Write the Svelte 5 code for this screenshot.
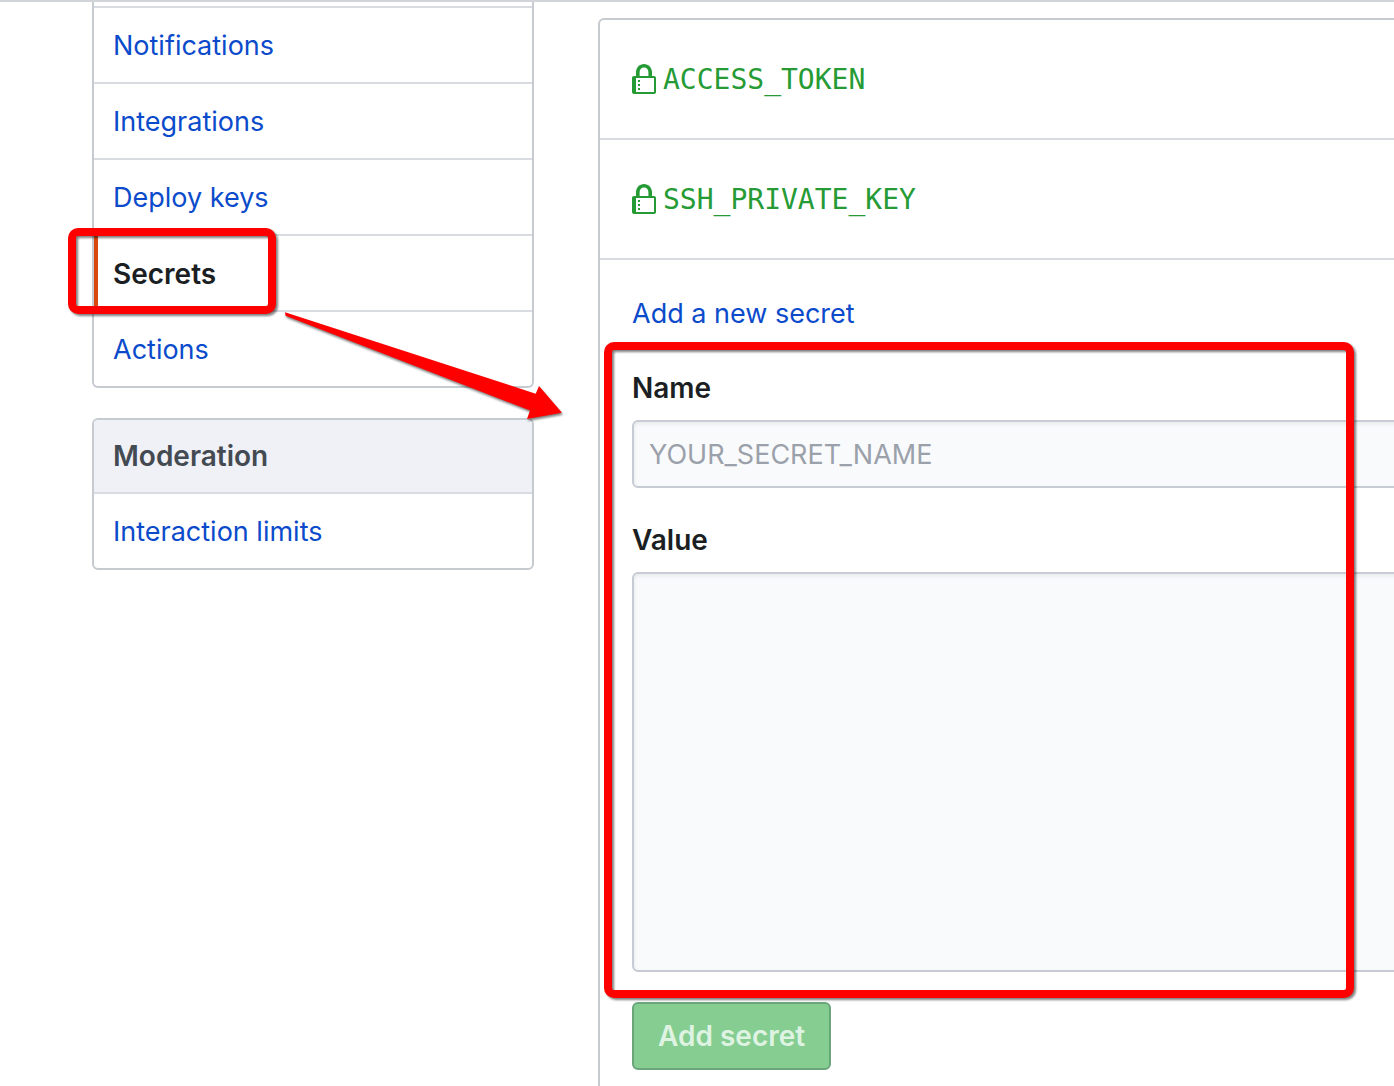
<script>
  const settings = ['Notifications', 'Integrations', 'Deploy keys', 'Secrets', 'Actions'];
  const active = 'Secrets';
  const secrets = ['ACCESS_TOKEN', 'SSH_PRIVATE_KEY'];
  let name = $state('');
  let value = $state('');
</script>

<div class="page">
  <aside>
    <nav class="menu continued" aria-label="Settings">
      <ul>
        {#each settings as item}
          <li class:active={item === active}>
            <a href="#settings" aria-current={item === active ? 'page' : undefined}>{item}</a>
            {#if item === active}
              <span class="mark mark-item"></span>
              <svg class="arrow" width="290" height="122" viewBox="280 308 290 122" aria-hidden="true">
                <path d="M285 312.3 L535.7 393.7 L539 386 L562 412.7 L527 419 L530 410.5 L285.5 315.7Z" />
              </svg>
            {/if}
          </li>
        {/each}
      </ul>
    </nav>
    <nav class="menu" aria-labelledby="moderation">
      <h2 id="moderation">Moderation</h2>
      <ul>
        <li><a href="#limits">Interaction limits</a></li>
      </ul>
    </nav>
  </aside>

  <main>
    <ul class="secrets">
      {#each secrets as secret}
        <li>
          <svg class="lock" width="24" height="32" viewBox="0 0 12 16" aria-hidden="true">
            <path d="M4 13H3v-1h1v1zm8-6v7c0 .55-.45 1-1 1H1c-.55 0-1-.45-1-1V7c0-.55.45-1 1-1h1V4c0-2.2 1.8-4 4-4s4 1.8 4 4v2h1c.55 0 1 .45 1 1zM3.8 6h4.41V4c0-1.22-.98-2.2-2.2-2.2-1.22 0-2.2.98-2.2 2.2v2H3.8zM11 7H2v7h9V7zM4 8H3v1h1V8zm0 2H3v1h1v-1z" />
          </svg>
          <code>{secret}</code>
        </li>
      {/each}
    </ul>
    <form onsubmit={(e) => e.preventDefault()}>
      <a class="add" href="#new">Add a new secret</a>
      <div class="fields">
        <label for="name">Name</label>
        <input id="name" type="text" placeholder="YOUR_SECRET_NAME" bind:value={name} />
        <label for="value">Value</label>
        <textarea id="value" bind:value></textarea>
        <span class="mark mark-form"></span>
      </div>
      <button type="submit" disabled={!name || !value}>Add secret</button>
    </form>
  </main>
</div>

<style>
  :global(body) {
    background: #fff;
  }
  .page,
  .page * {
    box-sizing: border-box;
  }
  .page {
    display: flex;
    gap: 64px;
    height: 100vh;
    overflow: hidden;
    padding-left: 92px;
    border-top: 2px solid #d1d5da;
    font-family: Inter, 'Liberation Sans', sans-serif;
    font-size: 27px;
    line-height: 42px;
    color: #1b1f23;
  }
  ul {
    list-style: none;
    margin: 0;
    padding: 0;
  }
  a {
    color: #0b4bcb;
    text-decoration: none;
  }
  aside {
    flex: 0 0 442px;
    display: flex;
    flex-direction: column;
    gap: 30px;
  }
  .menu {
    border: 2px solid #c6cbd1;
    border-radius: 6px;
  }
  .continued {
    padding-top: 4px;
    border-top: 0;
    border-top-left-radius: 0;
    border-top-right-radius: 0;
  }
  .menu li {
    position: relative;
    border-top: 2px solid #d8dce2;
  }
  .menu li a {
    display: block;
    padding: 17px 19px 15px;
  }
  .menu .active {
    z-index: 1;
  }
  .menu .active a {
    padding-left: 15px;
    border-left: 4px solid #d9480f;
    color: #1b1f23;
    font-size: 28px;
    font-weight: 600;
  }
  h2 {
    margin: 0;
    padding: 15px 19px;
    border-radius: 4px 4px 0 0;
    background: #f0f1f6;
    color: #444a52;
    font-size: 28px;
    font-weight: 600;
  }
  .mark {
    position: absolute;
    border: 8px solid #f00;
    border-radius: 10px;
    filter: drop-shadow(2px 2px 1px rgb(0 0 0 / 0.5));
    pointer-events: none;
  }
  .mark-item {
    left: -26px;
    top: -8px;
    width: 208px;
    height: 86px;
  }
  .arrow {
    position: absolute;
    left: 186px;
    top: 72px;
    fill: #f00;
    filter: drop-shadow(1px 2px 1px rgb(0 0 0 / 0.5));
    pointer-events: none;
  }
  main {
    flex: 1;
    min-height: 1100px;
    margin-top: 16px;
    margin-right: -66px;
    border: 2px solid #c6cbd1;
    border-radius: 6px;
  }
  .secrets li {
    display: flex;
    align-items: center;
    gap: 7px;
    height: 120px;
    padding: 2px 32px 0;
    border-bottom: 2px solid #d8dce2;
    color: #269b35;
  }
  .lock {
    fill: currentColor;
  }
  code {
    font-family: 'DejaVu Sans Mono', monospace;
    font-size: 28px;
  }
  form {
    padding: 33px 32px;
  }
  .add {
    display: block;
    margin-bottom: 32px;
  }
  .fields {
    position: relative;
    display: flex;
    flex-direction: column;
    margin-bottom: 30px;
  }
  label {
    margin-bottom: 11px;
    font-size: 28px;
    font-weight: 600;
  }
  input,
  textarea {
    display: block;
    width: 100%;
    margin: 0;
    padding: 12px 15px;
    border: 2px solid #c6cbd4;
    border-radius: 6px;
    background: #f9fafc;
    box-shadow: inset 0 2px 4px rgb(27 31 35 / 0.08);
    color: #1b1f23;
    font: inherit;
    line-height: 40px;
    outline: none;
  }
  input {
    height: 68px;
    margin-bottom: 31px;
  }
  textarea {
    height: 400px;
    resize: none;
  }
  input::placeholder {
    color: #9ba1aa;
    opacity: 1;
  }
  .mark-form {
    top: -25px;
    right: 72px;
    bottom: -26px;
    left: -28px;
  }
  button {
    display: block;
    height: 68px;
    padding: 0 24px;
    border: 2px solid #6ba57a;
    border-radius: 6px;
    background: #85cd91;
    color: #dff3e2;
    font: inherit;
    font-size: 28px;
    font-weight: 600;
  }
</style>
